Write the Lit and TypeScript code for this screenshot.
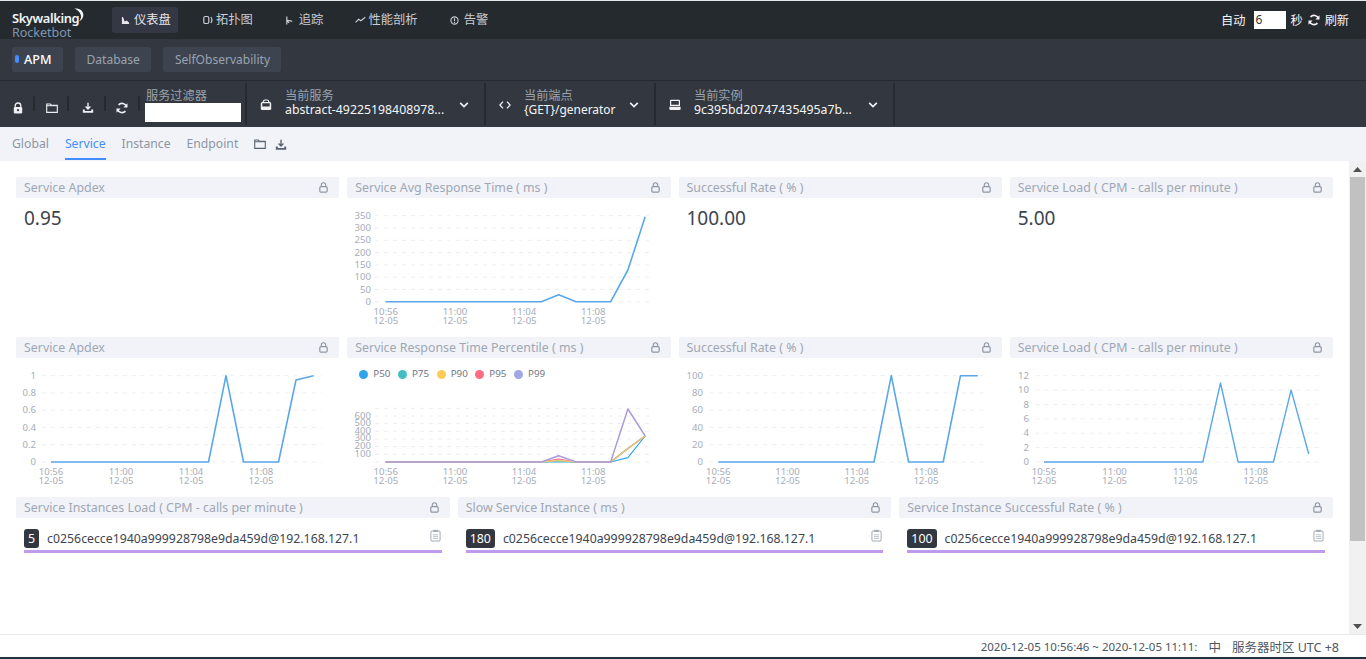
import { LitElement, html, css, svg } from "lit";
import { customElement } from "lit/decorators.js";

const lockI = html`<svg class="ic" viewBox="0 0 12 12" width="12" height="12"><path d="M3.2 5.5V3.800a2.800 2.800 0 0 1 5.600 0v1.700" fill="none" stroke="currentColor" stroke-width="1.300"/><rect x="1.800" y="5" width="8.400" height="6.400" rx="1.200" fill="currentColor"/><circle cx="6" cy="8.200" r="1.100" fill="var(--hole,#fff)"/></svg>`;
const lockO = html`<svg class="ic" viewBox="0 0 12 12" width="11" height="11"><path d="M3.600 5V3.200a2.400 2.400 0 0 1 4.800 0V5" fill="none" stroke="currentColor" stroke-width="1.200"/><rect x="2" y="5" width="8" height="6" rx="1.300" fill="none" stroke="currentColor" stroke-width="1.300"/></svg>`;
const folderI = html`<svg class="ic" viewBox="0 0 12 12" width="12" height="12"><path d="M.7 2h3.600l1 1.200h6v7.200H.7z" fill="none" stroke="currentColor" stroke-width="1.100"/><path d="M.7 3.200h10.600v1H.7z" fill="currentColor"/></svg>`;
const dlI = html`<svg class="ic" viewBox="0 0 12 12" width="12" height="12"><path d="M6 .8v6M3.600 4.600 6 7l2.400-2.400" fill="none" stroke="currentColor" stroke-width="1.400"/><path d="M.8 7.500v3.300h10.400V7.500H9.200v1.600H2.800V7.500z" fill="currentColor"/></svg>`;
const refreshI = html`<svg class="ic" viewBox="0 0 12 12" width="12" height="12"><path d="M10.400 4.600A4.600 4.600 0 0 0 2.600 2.900M1.600 7.400a4.600 4.600 0 0 0 7.800 1.700" fill="none" stroke="currentColor" stroke-width="1.700"/><path d="M11.500 1.200v4.200H7.400zM.5 10.800V6.600h4.100z" fill="currentColor"/></svg>`;
const chevI = html`<svg class="chev" viewBox="0 0 10 8" width="10" height="8"><path d="M1.200 1.800 5 5.600l3.800-3.800" fill="none" stroke="currentColor" stroke-width="1.700"/></svg>`;
const svcI = html`<svg class="ic" viewBox="0 0 12 12" width="12" height="12"><path d="M3.200 3.500V3a2 2 0 0 1 2-2h1.600a2 2 0 0 1 2 2v.5" fill="none" stroke="currentColor" stroke-width="1.200"/><path d="M2.300 3h7.400A1.500 1.500 0 0 1 11.200 4.500V9.800a1.200 1.200 0 0 1-1.200 1.200H2a1.200 1.200 0 0 1-1.200-1.200V4.500A1.500 1.500 0 0 1 2.300 3zM2.300 4.300V7.600h7.400V4.300z" fill="currentColor" fill-rule="evenodd"/></svg>`;
const codeI = html`<svg class="ic" viewBox="0 0 12 12" width="12" height="12"><path d="M4 2.600.9 6 4 9.400M8 2.600 11.100 6 8 9.400" fill="none" stroke="currentColor" stroke-width="1.300"/></svg>`;
const instI = html`<svg class="ic" viewBox="0 0 12 12" width="12" height="12"><path d="M2 .8h8a1 1 0 0 1 1 1V7H1V1.800a1 1 0 0 1 1-1zM2.200 2v3.800h7.600V2z" fill="currentColor" fill-rule="evenodd"/><path d="M.4 7.800h11.200V10a1 1 0 0 1-1 1H1.400a1 1 0 0 1-1-1z" fill="currentColor"/></svg>`;
const clipI = html`<svg class="clip" viewBox="0 0 12 14" width="11" height="13"><rect x="1" y="2" width="10" height="11" rx="1.500" fill="none" stroke="currentColor" stroke-width="1.100"/><rect x="3.500" y=".8" width="5" height="2.400" fill="currentColor"/><path d="M3.200 6.200h5.600M3.200 8.200h5.600M3.200 10.200h5.600" stroke="currentColor" stroke-width=".8"/></svg>`;
const navIcons = [
  html`<svg class="ic" viewBox="0 0 10 10" width="9" height="9"><path d="M1 1v8h8V7.500L6.500 5 4 6 3 3 2.200 1z" fill="currentColor"/></svg>`,
  html`<svg class="ic" viewBox="0 0 10 10" width="10" height="10"><rect x=".8" y="1.500" width="5" height="7" rx="1.500" fill="none" stroke="currentColor" stroke-width="1.200"/><path d="M7.800 2c1.200 1.600 1.200 4.400 0 6" fill="none" stroke="currentColor" stroke-width="1.200"/></svg>`,
  html`<svg class="ic" viewBox="0 0 10 10" width="9" height="9"><path d="M2 .5v9M2 4.500l6 1.500M2 5l2.500 2.500" fill="none" stroke="currentColor" stroke-width="1.300"/></svg>`,
  html`<svg class="ic" viewBox="0 0 12 10" width="11" height="10"><path d="M.6 7.500 4 4.200l2.400 1.600L11.200 2" fill="none" stroke="currentColor" stroke-width="1.200"/></svg>`,
  html`<svg class="ic" viewBox="0 0 10 10" width="9" height="9"><circle cx="5" cy="5" r="4" fill="none" stroke="currentColor" stroke-width="1.200"/><path d="M5 2.500v3.200M5 6.700v1" stroke="currentColor" stroke-width="1.200"/></svg>`,
];

interface ChartCfg {
  ox: number; oy: number; w: number; h: number;
  gridL: number; gridR: number; labelR: number;
  x0: number; dx: number;
  yl: [string, number][]; gridY: number[];
  series: { color: string; width: number; pts: [number, number][] }[];
  xLabY: number;
}

function flat(x0: number, dx: number, y: number, vals: Record<number, number>, n = 16): [number, number][] {
  const out: [number, number][] = [];
  for (let i = 0; i < n; i++) out.push([x0 + dx * i, i in vals ? vals[i] : y]);
  return out;
}

function renderChart(c: ChartCfg) {
  const xl = ["10:56", "11:00", "11:04", "11:08"];
  return html`<svg class="chart" viewBox="${c.ox} ${c.oy} ${c.w} ${c.h}" width=${c.w} height=${c.h}>
    ${c.gridY.map((y) => svg`<line x1=${c.gridL} x2=${c.gridR} y1=${y} y2=${y} stroke="#eceef2" stroke-width="1" stroke-dasharray="4 5"/>`)}
    ${c.yl.map(([t, y]) => svg`<text x=${c.labelR} y=${y + 3.5} text-anchor="end" class="tick">${t}</text>`)}
    ${xl.map((t, i) => {
      const x = c.x0 + c.dx * 4 * i;
      return svg`<text x=${x} y=${c.xLabY} text-anchor="middle" class="tick">${t}</text><text x=${x} y=${c.xLabY + 9} text-anchor="middle" class="tick">12-05</text>`;
    })}
    ${c.series.map((s) => svg`<polyline points=${s.pts.map((p) => p.join(",")).join(" ")} fill="none" stroke=${s.color} stroke-width=${s.width} stroke-linejoin="round"/>`)}
  </svg>`;
}

const L = "#5aa7ea";
const r2y = [375.7, 392.9, 410.2, 427.5, 444.7, 462];

const c1: ChartCfg = {
  ox: 347, oy: 198, w: 323, h: 131, gridL: 375, gridR: 654, labelR: 371, x0: 385.7, dx: 17.3,
  yl: ["350", "300", "250", "200", "150", "100", "50", "0"].map((t, i) => [t, 215.2 + i * 12.3] as [string, number]),
  gridY: [215.7, 228, 240.3, 252.6, 264.9, 277.2, 289.5, 301.8],
  xLabY: 315,
  series: [{ color: L, width: 1.6, pts: flat(385.7, 17.3, 301.8, { 10: 294.7, 14: 270, 15: 216.7 }) }],
};
const c5: ChartCfg = {
  ox: 16, oy: 358, w: 323, h: 131, gridL: 41.7, gridR: 321.7, labelR: 36, x0: 51, dx: 17.5,
  yl: ["1", "0.8", "0.6", "0.4", "0.2", "0"].map((t, i) => [t, r2y[i] - 0.5] as [string, number]),
  gridY: r2y, xLabY: 475,
  series: [{ color: L, width: 1.6, pts: flat(51, 17.5, 462, { 10: 375.7, 14: 380, 15: 375.7 }) }],
};
const pY = [408.3, 416, 423.6, 431.3, 439, 446.6, 454.3, 462];
const c6: ChartCfg = {
  ox: 347, oy: 358, w: 323, h: 131, gridL: 375, gridR: 654, labelR: 371, x0: 385.7, dx: 17.3,
  yl: [["600", 415], ["500", 422.5], ["400", 430], ["300", 437.7], ["200", 445.5], ["100", 453.3]],
  gridY: pY, xLabY: 475,
  series: [
    { color: "#45bfc0", width: 1.2, pts: flat(385.7, 17.3, 462, { 10: 461, 14: 448.5, 15: 436 }) },
    { color: "#30a4eb", width: 1.2, pts: flat(385.7, 17.3, 462, { 14: 457.7, 15: 436 }) },
    { color: "#ff6a84", width: 1.2, pts: flat(385.7, 17.3, 462, { 10: 459, 14: 448.5, 15: 436 }) },
    { color: "#e6c97a", width: 1.4, pts: flat(385.7, 17.3, 462, { 10: 460.5, 14: 448.5, 15: 436 }) },
    { color: "#ad9cdb", width: 1.5, pts: flat(385.7, 17.3, 462, { 10: 455.7, 14: 409, 15: 436 }) },
  ],
};
const c7: ChartCfg = {
  ox: 678, oy: 358, w: 323, h: 131, gridL: 708.5, gridR: 987, labelR: 702, x0: 717.3, dx: 17.3,
  yl: ["100", "80", "60", "40", "20", "0"].map((t, i) => [t, r2y[i] - 0.5] as [string, number]),
  gridY: r2y, xLabY: 475,
  series: [{ color: L, width: 1.6, pts: flat(717.3, 17.3, 462, { 10: 375.7, 14: 375.7, 15: 375.7 }) }],
};
const c8Y = [375.7, 390.1, 404.5, 418.8, 433.2, 447.6, 462];
const c8: ChartCfg = {
  ox: 1010, oy: 358, w: 323, h: 131, gridL: 1035.6, gridR: 1319, labelR: 1029, x0: 1044, dx: 17.65,
  yl: ["12", "10", "8", "6", "4", "2", "0"].map((t, i) => [t, c8Y[i] - 0.5] as [string, number]),
  gridY: c8Y, xLabY: 475,
  series: [{ color: L, width: 1.4, pts: flat(1044, 17.65, 462, { 10: 383, 14: 390.1, 15: 454 }) }],
};

const inst = "c0256cecce1940a999928798e9da459d@192.168.127.1";

@customElement("app-root")
export class AppRoot extends LitElement {
  static styles = css`
    :host { display: flex; flex-direction: column; width: 1366px; height: 659px; overflow: hidden; background: #fff;
      font-family: "Noto Sans", "Noto Sans CJK SC", sans-serif; font-size: 13px; color: #3d444f; }
    .ic, .chev, .clip { display: block; flex: none; }
    .top { flex: none; height: 38px; border-top: 1px solid #e4e6ea; background: #252a2f; display: flex; align-items: center; color: #c9cdd3; }
    .logo { flex: none; width: 100px; margin-left: 12px; position: relative; height: 38px; }
    .logo .sky { position: absolute; left: 0; top: 8px; color: #f2f4f6; font-size: 12.9px; font-weight: 600; letter-spacing: -.4px; line-height: 18px; }
    .logo .bot { position: absolute; left: 0; top: 23px; color: #7f97b2; font-size: 12.500px; line-height: 18px; }
    .logo svg { position: absolute; left: 60px; top: 7px; }
    .nav { display: flex; align-items: center; height: 26px; font-size: 12.3px; padding: 0 7px 0 9px; border-radius: 3px; line-height: 26px; margin-right: 16px; }
    .nav.on { background: #333844; color: #e6e8eb; }
    .slot { flex: none; width: 13px; }
    .slot.wide { width: 14px; }
    .spacer { flex: 1; }
    .auto { display: flex; align-items: center; color: #f4f5f7; font-size: 12.2px; padding-right: 17px; }
    .auto .inp { width: 32px; height: 18px; background: #fff; color: #333; margin: 0 4px 0 9px; padding-left: 1px; box-sizing: border-box; line-height: 18px; font-size: 12px; }
    .auto .ic { margin: 0 5px 0 5px; }
    .groups { flex: none; height: 41px; background: #333840; border-bottom: 1px solid #252a2f; display: flex; align-items: center; padding-left: 12px; gap: 12px; font-size: 12.05px; }
    .gbtn { height: 25px; line-height: 25px; background: #3d444f; border-radius: 3px; padding: 0 11px 0 12px; color: #9aa3af; position: relative; }
    .gbtn.on { color: #fff; font-weight: 500; font-size: 12.6px; }
    .gbtn.on::before { content: ""; position: absolute; left: 3px; top: 8px; width: 4px; height: 8px; border-radius: 2px; background: #448dfe; }
    .tool { flex: none; height: 46px; background: #333840; display: flex; color: #eef0f3; --hole: #333840; }
    .tbtn { flex: none; height: 46px; display: flex; align-items: center; justify-content: center; position: relative; box-sizing: border-box; padding-top: 7px; }
    .tbtn.sep::after { content: ""; position: absolute; right: 0; top: 15px; height: 15px; width: 2px; background: #252a2f; }
    .tbtn.last { padding-right: 2px; }
    .filter { flex: none; width: 105px; box-sizing: border-box; padding-left: 5px; display: flex; flex-direction: column; }
    .flabel { font-size: 12.2px; color: #9aa3af; line-height: 14px; margin: 8px 0 0 1px; }
    .finput { width: 96px; height: 19px; background: #fff; }
    .sec { flex: none; box-sizing: border-box; height: 42px; margin-top: 2px; border-left: 2px solid #252a2f; display: flex; align-items: center; position: relative; }
    .sec .ic { margin-left: 13px; margin-top: 1px; }
    .sec .txt { margin-left: 13px; flex: 1; min-width: 0; margin-top: -3px; }
    .sec .lab { font-size: 12.2px; line-height: 13px; color: #9aa3af; }
    .sec .val { font-size: 12.3px; line-height: 15px; color: #f4f5f7; white-space: nowrap; }
    .sec .val.gen { font-size: 11.95px; }
    .sec .chev { margin: 2px 15px 0 12px; }
    .endcap { flex: none; width: 2px; height: 42px; margin-top: 2px; background: #252a2f; }
    .tabs { flex: none; height: 34px; background: #f1f3f9; display: flex; align-items: stretch; padding-left: 12px; color: #8d95a3; box-sizing: border-box; font-size: 12.2px; }
    .tab { margin-right: 16px; height: 33px; line-height: 33px; box-sizing: border-box; }
    .tab.on { color: #448dfe; border-bottom: 2px solid #448dfe; }
    .tabs .f { display: flex; align-items: center; color: #5a6270; margin-top: 1px; }
    .tabs .f1 { margin: 0 9px 0 0; }
    .main { flex: 1; min-height: 0; display: flex; background: #fff; }
    .content { flex: 1; min-width: 0; padding: 16px; box-sizing: border-box; display: flex; flex-direction: column; gap: 8px; }
    .row4, .row3 { display: grid; gap: 8px; height: 152px; flex: none; }
    .row4 { grid-template-columns: repeat(4, 1fr); }
    .row3 { grid-template-columns: repeat(3, 1fr); }
    .card { min-width: 0; display: flex; flex-direction: column; }
    .chd { flex: none; height: 21px; background: #f1f3f9; border-radius: 2px; display: flex; align-items: center; justify-content: space-between; padding: 0 10px 0 8px; color: #a0a7b4; font-size: 12.38px; }
    .chd .ic { color: #8d95a3; }
    .num { font-size: 19px; line-height: 26px; padding: 7px 8px 0; color: #3d444f; }
    .chart { display: block; flex: none; overflow: visible; }
    .tick { font-family: "Noto Sans", sans-serif; font-size: 9.6px; fill: #a6adb9; }
    .legend { position: relative; height: 0; }
    .legs { position: absolute; left: 12px; top: 9px; display: flex; gap: 8px; font-size: 9.800px; color: #6f7683; line-height: 14px; }
    .leg { display: flex; align-items: center; gap: 5px; width: 30.700px; white-space: nowrap; }
    .dot { flex: none; width: 9px; height: 9px; border-radius: 50%; }
    .item { display: flex; align-items: center; padding: 11px 8px 0; height: 19px; }
    .badge { flex: none; height: 19px; line-height: 19px; background: #333840; color: #fff; border-radius: 3px; padding: 0 4px; min-width: 7px; text-align: center; font-size: 12.4px; margin-right: 8px; }
    .itxt { flex: 1; font-size: 12.3px; color: #3d444f; white-space: nowrap; }
    .clip { color: #a6adb9; margin-top: -6px; margin-right: 1px; }
    .bar { height: 3px; background: #bf9bee; margin: 2px 8px 0; }
    .sb { flex: none; width: 17px; background: #f1f1f1; display: flex; flex-direction: column; }
    .sb .a { flex: none; height: 16px; display: flex; align-items: center; justify-content: center; }
    .sb .th { flex: none; height: 364px; background: #c1c1c1; margin: 0 1px; }
    .sb .g { flex: 1; }
    .foot { flex: none; height: 23px; box-sizing: border-box; border-top: 1px solid #e8eaee; background: #fff; display: flex; justify-content: flex-end; align-items: center; padding-right: 27px; font-size: 12.5px; color: #4e5663; gap: 11px; white-space: pre; }
    .foot .d { font-size: 11.500px; }
    .edge { flex: none; height: 2px; background: #1f3442; }
  `;

  private card(title: string, body: unknown) {
    return html`<div class="card"><div class="chd"><span>${title}</span>${lockO}</div>${body}</div>`;
  }

  private item(n: string, title: string) {
    return this.card(title, html`<div class="item"><span class="badge">${n}</span><span class="itxt">${inst}</span>${clipI}</div><div class="bar"></div>`);
  }

  render() {
    const navs = ["仪表盘", "拓扑图", "追踪", "性能剖析", "告警"];
    const legend = [["P50", "#30a4eb"], ["P75", "#45bfc0"], ["P90", "#ffcc55"], ["P95", "#ff6a84"], ["P99", "#a0a7e6"]];
    return html`
      <div class="top">
        <div class="logo">
          <span class="sky">Skywalking</span><span class="bot">Rocketbot</span>
          <svg viewBox="0 0 16 18" width="13" height="15"><path d="M3 .5c6-.8 11 2.600 11 8 0 3.600-2.400 6.800-6 8 2.800-2.400 3.600-5.200 2.800-8C10 5 7 2 3 .5z" fill="#f2f4f6"/></svg>
        </div>
        ${navs.map((n, i) => html`<div class="nav ${i === 0 ? "on" : ""}"><span class="slot ${i === 2 || i === 4 ? "wide" : ""}">${navIcons[i]}</span><span>${n}</span></div>`)}
        <div class="spacer"></div>
        <div class="auto"><span>自动</span><div class="inp">6</div><span>秒</span>${refreshI}<span>刷新</span></div>
      </div>
      <div class="groups">
        <div class="gbtn on">APM</div><div class="gbtn">Database</div><div class="gbtn">SelfObservability</div>
      </div>
      <div class="tool">
        <div class="tbtn sep" style="width:35px">${lockI}</div>
        <div class="tbtn sep" style="width:34px">${folderI}</div>
        <div class="tbtn sep" style="width:37px">${dlI}</div>
        <div class="tbtn sep last" style="width:34px">${refreshI}</div>
        <div class="filter"><div class="flabel">服务过滤器</div><div class="finput"></div></div>
        <div class="sec" style="width:239px">${svcI}<div class="txt"><div class="lab">当前服务</div><div class="val">abstract-49225198408978...</div></div>${chevI}</div>
        <div class="sec" style="width:170px">${codeI}<div class="txt"><div class="lab">当前端点</div><div class="val gen">{GET}/generator</div></div>${chevI}</div>
        <div class="sec" style="width:239px">${instI}<div class="txt"><div class="lab">当前实例</div><div class="val">9c395bd20747435495a7b...</div></div>${chevI}</div>
        <div class="endcap"></div>
      </div>
      <div class="tabs">
        <div class="tab">Global</div><div class="tab on">Service</div><div class="tab">Instance</div><div class="tab">Endpoint</div>
        <span class="f f1">${folderI}</span><span class="f">${dlI}</span>
      </div>
      <div class="main">
        <div class="content">
          <div class="row4">
            ${this.card("Service Apdex", html`<div class="num">0.95</div>`)}
            ${this.card("Service Avg Response Time ( ms )", renderChart(c1))}
            ${this.card("Successful Rate ( % )", html`<div class="num">100.00</div>`)}
            ${this.card("Service Load ( CPM - calls per minute )", html`<div class="num">5.00</div>`)}
          </div>
          <div class="row4">
            ${this.card("Service Apdex", renderChart(c5))}
            ${this.card("Service Response Time Percentile ( ms )", html`<div class="legend"><div class="legs">${legend.map(([t, c]) => html`<div class="leg"><span class="dot" style="background:${c}"></span>${t}</div>`)}</div></div>${renderChart(c6)}`)}
            ${this.card("Successful Rate ( % )", renderChart(c7))}
            ${this.card("Service Load ( CPM - calls per minute )", renderChart(c8))}
          </div>
          <div class="row3">
            ${this.item("5", "Service Instances Load ( CPM - calls per minute )")}
            ${this.item("180", "Slow Service Instance ( ms )")}
            ${this.item("100", "Service Instance Successful Rate ( % )")}
          </div>
        </div>
        <div class="sb">
          <div class="a"><svg viewBox="0 0 9 5" width="9" height="5"><path d="M4.500 0 9 5H0z" fill="#505050"/></svg></div>
          <div class="th"></div><div class="g"></div>
          <div class="a"><svg viewBox="0 0 9 5" width="9" height="5"><path d="M0 0h9L4.500 5z" fill="#505050"/></svg></div>
        </div>
      </div>
      <div class="foot"><span class="d">2020-12-05 10:56:46 ~ 2020-12-05 11:11:</span><span>中</span><span>服务器时区 UTC +8</span></div>
      <div class="edge"></div>
    `;
  }
}
